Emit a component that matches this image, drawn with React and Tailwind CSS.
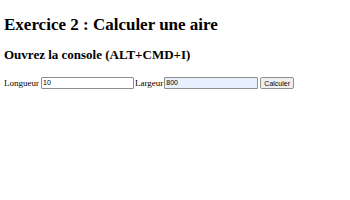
export default function App() {
  return (
    <div className="w-[350px] h-[200px] bg-white p-[4px] font-['Liberation_Serif',serif] text-black">
      <h1 className="text-[17px] font-bold leading-[20px] mt-[11px] mb-[12px]">Exercice 2 : Calculer une aire</h1>
      <h2 className="text-[13px] font-bold leading-[15px] mt-[12px] mb-[12px]">Ouvrez la console (ALT+CMD+I)</h2>
      <div className="flex items-center text-[9px] leading-[12px] mt-[15px]">
        <label>Longueur</label>
        <input
          defaultValue="10"
          className="ml-[2px] w-[93px] h-[12px] border border-[#8f8f8f] rounded-[1px] px-[1px] text-[7px] font-['Liberation_Sans',sans-serif] bg-white outline-none"
        />
        <label className="ml-[1px]">Largeur</label>
        <input
          defaultValue="800"
          className="ml-[1px] w-[94px] h-[12px] border border-[#8f8f8f] rounded-[1px] px-[1px] text-[7px] font-['Liberation_Sans',sans-serif] bg-[#e8f0fe] outline-none"
        />
        <button className="ml-[2px] h-[12px] px-[3px] border border-[#8f8f8f] rounded-[2px] bg-[#efefef] text-[7px] font-['Liberation_Sans',sans-serif] leading-none">
          Calculer
        </button>
      </div>
    </div>
  );
}
